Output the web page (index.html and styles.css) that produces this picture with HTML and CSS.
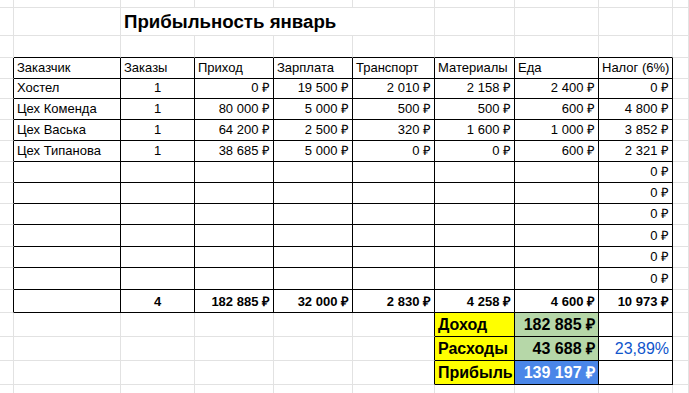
FILE: index.html
```html
<!DOCTYPE html>
<html lang="ru">
<head>
<meta charset="utf-8">
<title>Прибыльность январь</title>
<link rel="stylesheet" href="styles.css">
</head>
<body>
<div class="sheet">
  <div class="row h8">
    <div class="c"></div><div class="c"></div><div class="c"></div><div class="c"></div><div class="c"></div><div class="c"></div><div class="c"></div><div class="c"></div><div class="c"></div><div class="c"></div>
  </div>
  <div class="row h28">
    <div class="c"></div><div class="c"></div><div class="c title span4">Прибыльность январь</div><div class="c"></div><div class="c"></div><div class="c"></div><div class="c"></div>
  </div>
  <div class="row h22">
    <div class="c"></div><div class="c kb"></div><div class="c kb"></div><div class="c kb"></div><div class="c kb"></div><div class="c kb"></div><div class="c kb"></div><div class="c kb"></div><div class="c kb"></div><div class="c"></div>
  </div>
  <div class="row h21">
    <div class="c kr"></div><div class="c k">Заказчик</div><div class="c k">Заказы</div><div class="c k">Приход</div><div class="c k">Зарплата</div><div class="c k">Транспорт</div><div class="c k">Материалы</div><div class="c k">Еда</div><div class="c k">Налог (6%)</div><div class="c"></div>
  </div>
  <div class="row h20">
    <div class="c kr"></div><div class="c k">Хостел</div><div class="c k m">1</div><div class="c k r">0 ₽</div><div class="c k r">19 500 ₽</div><div class="c k r">2 010 ₽</div><div class="c k r">2 158 ₽</div><div class="c k r">2 400 ₽</div><div class="c k r">0 ₽</div><div class="c"></div>
  </div>
  <div class="row h21">
    <div class="c kr"></div><div class="c k">Цех Коменда</div><div class="c k m">1</div><div class="c k r">80 000 ₽</div><div class="c k r">5 000 ₽</div><div class="c k r">500 ₽</div><div class="c k r">500 ₽</div><div class="c k r">600 ₽</div><div class="c k r">4 800 ₽</div><div class="c"></div>
  </div>
  <div class="row h21">
    <div class="c kr"></div><div class="c k">Цех Васька</div><div class="c k m">1</div><div class="c k r">64 200 ₽</div><div class="c k r">2 500 ₽</div><div class="c k r">320 ₽</div><div class="c k r">1 600 ₽</div><div class="c k r">1 000 ₽</div><div class="c k r">3 852 ₽</div><div class="c"></div>
  </div>
  <div class="row h21">
    <div class="c kr"></div><div class="c k">Цех Типанова</div><div class="c k m">1</div><div class="c k r">38 685 ₽</div><div class="c k r">5 000 ₽</div><div class="c k r">0 ₽</div><div class="c k r">0 ₽</div><div class="c k r">600 ₽</div><div class="c k r">2 321 ₽</div><div class="c"></div>
  </div>
  <div class="row h21">
    <div class="c kr"></div><div class="c k"></div><div class="c k"></div><div class="c k"></div><div class="c k"></div><div class="c k"></div><div class="c k"></div><div class="c k"></div><div class="c k r">0 ₽</div><div class="c"></div>
  </div>
  <div class="row h21">
    <div class="c kr"></div><div class="c k"></div><div class="c k"></div><div class="c k"></div><div class="c k"></div><div class="c k"></div><div class="c k"></div><div class="c k"></div><div class="c k r">0 ₽</div><div class="c"></div>
  </div>
  <div class="row h21">
    <div class="c kr"></div><div class="c k"></div><div class="c k"></div><div class="c k"></div><div class="c k"></div><div class="c k"></div><div class="c k"></div><div class="c k"></div><div class="c k r">0 ₽</div><div class="c"></div>
  </div>
  <div class="row h22">
    <div class="c kr"></div><div class="c k"></div><div class="c k"></div><div class="c k"></div><div class="c k"></div><div class="c k"></div><div class="c k"></div><div class="c k"></div><div class="c k r">0 ₽</div><div class="c"></div>
  </div>
  <div class="row h21">
    <div class="c kr"></div><div class="c k"></div><div class="c k"></div><div class="c k"></div><div class="c k"></div><div class="c k"></div><div class="c k"></div><div class="c k"></div><div class="c k r">0 ₽</div><div class="c"></div>
  </div>
  <div class="row h22">
    <div class="c kr"></div><div class="c k"></div><div class="c k"></div><div class="c k"></div><div class="c k"></div><div class="c k"></div><div class="c k"></div><div class="c k"></div><div class="c k r">0 ₽</div><div class="c"></div>
  </div>
  <div class="row h23">
    <div class="c kr"></div><div class="c k"></div><div class="c k m b">4</div><div class="c k r b">182 885 ₽</div><div class="c k r b">32 000 ₽</div><div class="c k r b">2 830 ₽</div><div class="c k r b">4 258 ₽</div><div class="c k r b">4 600 ₽</div><div class="c k r b">10 973 ₽</div><div class="c"></div>
  </div>
  <div class="row h24">
    <div class="c"></div><div class="c"></div><div class="c"></div><div class="c"></div><div class="c"></div><div class="c kr"></div><div class="c k big yellow">Доход</div><div class="c k big r green">182 885 ₽</div><div class="c k"></div><div class="c"></div>
  </div>
  <div class="row h24">
    <div class="c"></div><div class="c"></div><div class="c"></div><div class="c"></div><div class="c"></div><div class="c kr"></div><div class="c k big yellow">Расходы</div><div class="c k big r green">43 688 ₽</div><div class="c k pct r">23,89%</div><div class="c"></div>
  </div>
  <div class="row h24">
    <div class="c"></div><div class="c"></div><div class="c"></div><div class="c"></div><div class="c"></div><div class="c kr"></div><div class="c k big yellow">Прибыль</div><div class="c k big r blue">139 197 ₽</div><div class="c k"></div><div class="c"></div>
  </div>
  <div class="row h24">
    <div class="c"></div><div class="c"></div><div class="c"></div><div class="c"></div><div class="c"></div><div class="c"></div><div class="c"></div><div class="c"></div><div class="c"></div><div class="c"></div>
  </div>
</div>
</body>
</html>
```

FILE: styles.css
```css
html, body {
  margin: 0;
  padding: 0;
  background: #ffffff;
}

body {
  font-family: "Liberation Sans", Arial, sans-serif;
  color: #000000;
  overflow: hidden;
}

.sheet {
  display: flex;
  flex-direction: column;
  width: 689px;
}

.row {
  display: grid;
  grid-template-columns: 14px 107px 74px 79px 79px 82px 80px 84px 74px 1fr;
  box-sizing: border-box;
}

.h8 { height: 8px; }
.h20 { height: 20px; }
.h21 { height: 21px; }
.h22 { height: 22px; }
.h23 { height: 23px; }
.h24 { height: 24px; }
.h28 { height: 28px; }

.c {
  box-sizing: border-box;
  min-width: 0;
  border-right: 1px solid #e2e2e2;
  border-bottom: 1px solid #e2e2e2;
  display: flex;
  align-items: flex-end;
  padding: 0 3px 2px 3px;
  font-size: 13px;
  line-height: 16px;
  white-space: nowrap;
  overflow: hidden;
}

.k {
  border-right-color: #000000;
  border-bottom-color: #000000;
}

.kr { border-right-color: #000000; }
.kb { border-bottom-color: #000000; }

.r { justify-content: flex-end; }
.m { justify-content: center; }
.b { font-weight: bold; }

.span4 { grid-column: span 4; }

.title {
  font-size: 18.67px;
  line-height: 22px;
  font-weight: bold;
  overflow: visible;
}

.big {
  font-size: 16px;
  line-height: 19px;
  font-weight: bold;
}

.yellow { background: #ffff00; }
.green { background: #b6d7a8; }
.blue { background: #4a86e8; color: #ffffff; }

.pct {
  font-size: 16px;
  line-height: 19px;
  color: #1155cc;
}
```
